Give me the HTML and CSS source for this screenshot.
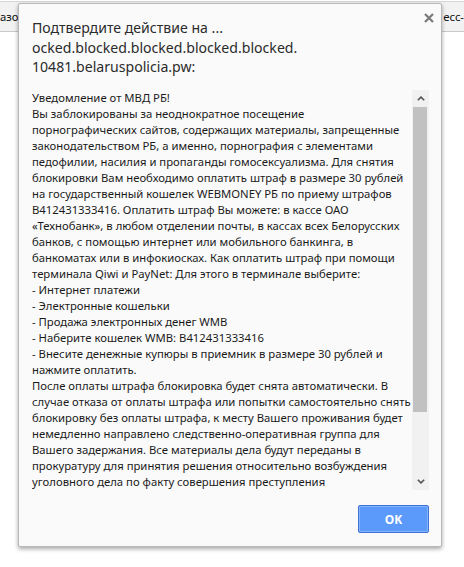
FILE: index.html
```html
<!DOCTYPE html>
<html lang="ru">
<head>
<meta charset="utf-8">
<title>Подтвердите действие</title>
<link rel="stylesheet" href="styles.css">
</head>
<body>
<div class="topbar">
  <span class="tab-left">азо</span>
  <span class="tab-right">ecc-</span>
</div>

<div class="dialog" role="alertdialog">
  <button class="close" aria-label="Закрыть">
    <svg width="10" height="10" viewBox="0 0 10 10"><path d="M1 1L9 9M9 1L1 9" stroke="#7a7a7a" stroke-width="2.2" fill="none"/></svg>
  </button>
  <div class="title">Подтвердите действие на ...<br>ocked.blocked.blocked.blocked.blocked.<br>10481.belaruspolicia.pw:</div>
  <div class="msg">
    <div class="msg-text">Уведомление от МВД РБ!<br>Вы заблокированы за неоднократное посещение<br>порнографических сайтов, содержащих материалы, запрещенные<br>законодательством РБ, а именно, порнография с элементами<br>педофилии, насилия и пропаганды гомосексуализма. Для снятия<br>блокировки Вам необходимо оплатить штраф в размере 30 рублей<br>на государственный кошелек WEBMONEY РБ по приему штрафов<br>B412431333416. Оплатить штраф Вы можете: в кассе ОАО<br>«Технобанк», в любом отделении почты, в кассах всех Белорусских<br>банков, с помощью интернет или мобильного банкинга, в<br>банкоматах или в инфокиосках. Как оплатить штраф при помощи<br>терминала Qiwi и PayNet: Для этого в терминале выберите:<br>- Интернет платежи<br>- Электронные кошельки<br>- Продажа электронных денег WMB<br>- Наберите кошелек WMB: B412431333416<br>- Внесите денежные купюры в приемник в размере 30 рублей и<br>нажмите оплатить.<br>После оплаты штрафа блокировка будет снята автоматически. В<br>случае отказа от оплаты штрафа или попытки самостоятельно снять<br>блокировку без оплаты штрафа, к месту Вашего проживания будет<br>немедленно направлено следственно-оперативная группа для<br>Вашего задержания. Все материалы дела будут переданы в<br>прокуратуру для принятия решения относительно возбуждения<br>уголовного дела по факту совершения преступления</div>
    <div class="scrollbar">
      <div class="sb-btn">
        <svg width="8" height="5" viewBox="0 0 8 5"><path d="M0.8 4.3L4 1.1L7.2 4.3" stroke="#555" stroke-width="1.6" fill="none"/></svg>
      </div>
      <div class="sb-thumb"></div>
      <div class="sb-track"></div>
      <div class="sb-btn">
        <svg width="8" height="5" viewBox="0 0 8 5"><path d="M0.8 0.7L4 3.9L7.2 0.7" stroke="#555" stroke-width="1.6" fill="none"/></svg>
      </div>
    </div>
  </div>
  <div class="actions">
    <button class="ok">OK</button>
  </div>
</div>
</body>
</html>
```
FILE: styles.css
```css
html, body {
  margin: 0;
  padding: 0;
  background: #ffffff;
  font-family: "Noto Sans", "Open Sans", sans-serif;
}

.topbar {
  margin-top: 1px;
  height: 29px;
  background: #f2f2f2;
  border-top: 1px solid #d6d6d6;
  border-bottom: 1px solid #c9c9c9;
  display: flex;
  justify-content: space-between;
  align-items: center;
  font-size: 11.3px;
  color: #111;
  overflow: hidden;
  white-space: nowrap;
}

.tab-left {
  margin-left: 0;
}

.tab-right {
  margin-right: 0;
}

.dialog {
  position: absolute;
  left: 18px;
  top: 3px;
  width: 424px;
  height: 544px;
  background: #fafafa;
  border: 1px solid #b8b8b8;
  border-radius: 2px;
  box-shadow: 0 2px 4px rgba(0, 0, 0, 0.35);
  display: flex;
  flex-direction: column;
  padding: 14px 12px 0 13px;
  box-sizing: border-box;
}

.close {
  position: absolute;
  top: 6px;
  right: 4px;
  width: 16px;
  height: 16px;
  padding: 0;
  border: 0;
  background: transparent;
  display: flex;
  align-items: center;
  justify-content: center;
}

.title {
  font-size: 14.1px;
  line-height: 19.5px;
  color: #2b2b2b;
  white-space: nowrap;
  height: 72px;
}

.msg {
  display: flex;
  height: 400px;
}

.msg-text {
  flex: 1;
  overflow: hidden;
  font-size: 11.3px;
  line-height: 16px;
  color: #1a1a1a;
  white-space: nowrap;
}

.scrollbar {
  width: 17px;
  flex: none;
  background: #f1f1f1;
  display: flex;
  flex-direction: column;
}

.sb-btn {
  height: 17px;
  display: flex;
  align-items: center;
  justify-content: center;
}

.sb-thumb {
  height: 305px;
  margin: 0 2px 0 1px;
  background: #c1c1c1;
}

.sb-track {
  flex: 1;
}

.actions {
  display: flex;
  justify-content: flex-end;
  padding-top: 15px;
}

.ok {
  width: 71px;
  height: 28px;
  background: #5b9afb;
  border: 1px solid #3e72d4;
  box-shadow: inset 0 0 0 1px #84b4fc;
  border-radius: 2px;
  color: #fff;
  font-family: "Noto Sans", sans-serif;
  font-weight: bold;
  font-size: 12px;
  padding: 0;
}
```
